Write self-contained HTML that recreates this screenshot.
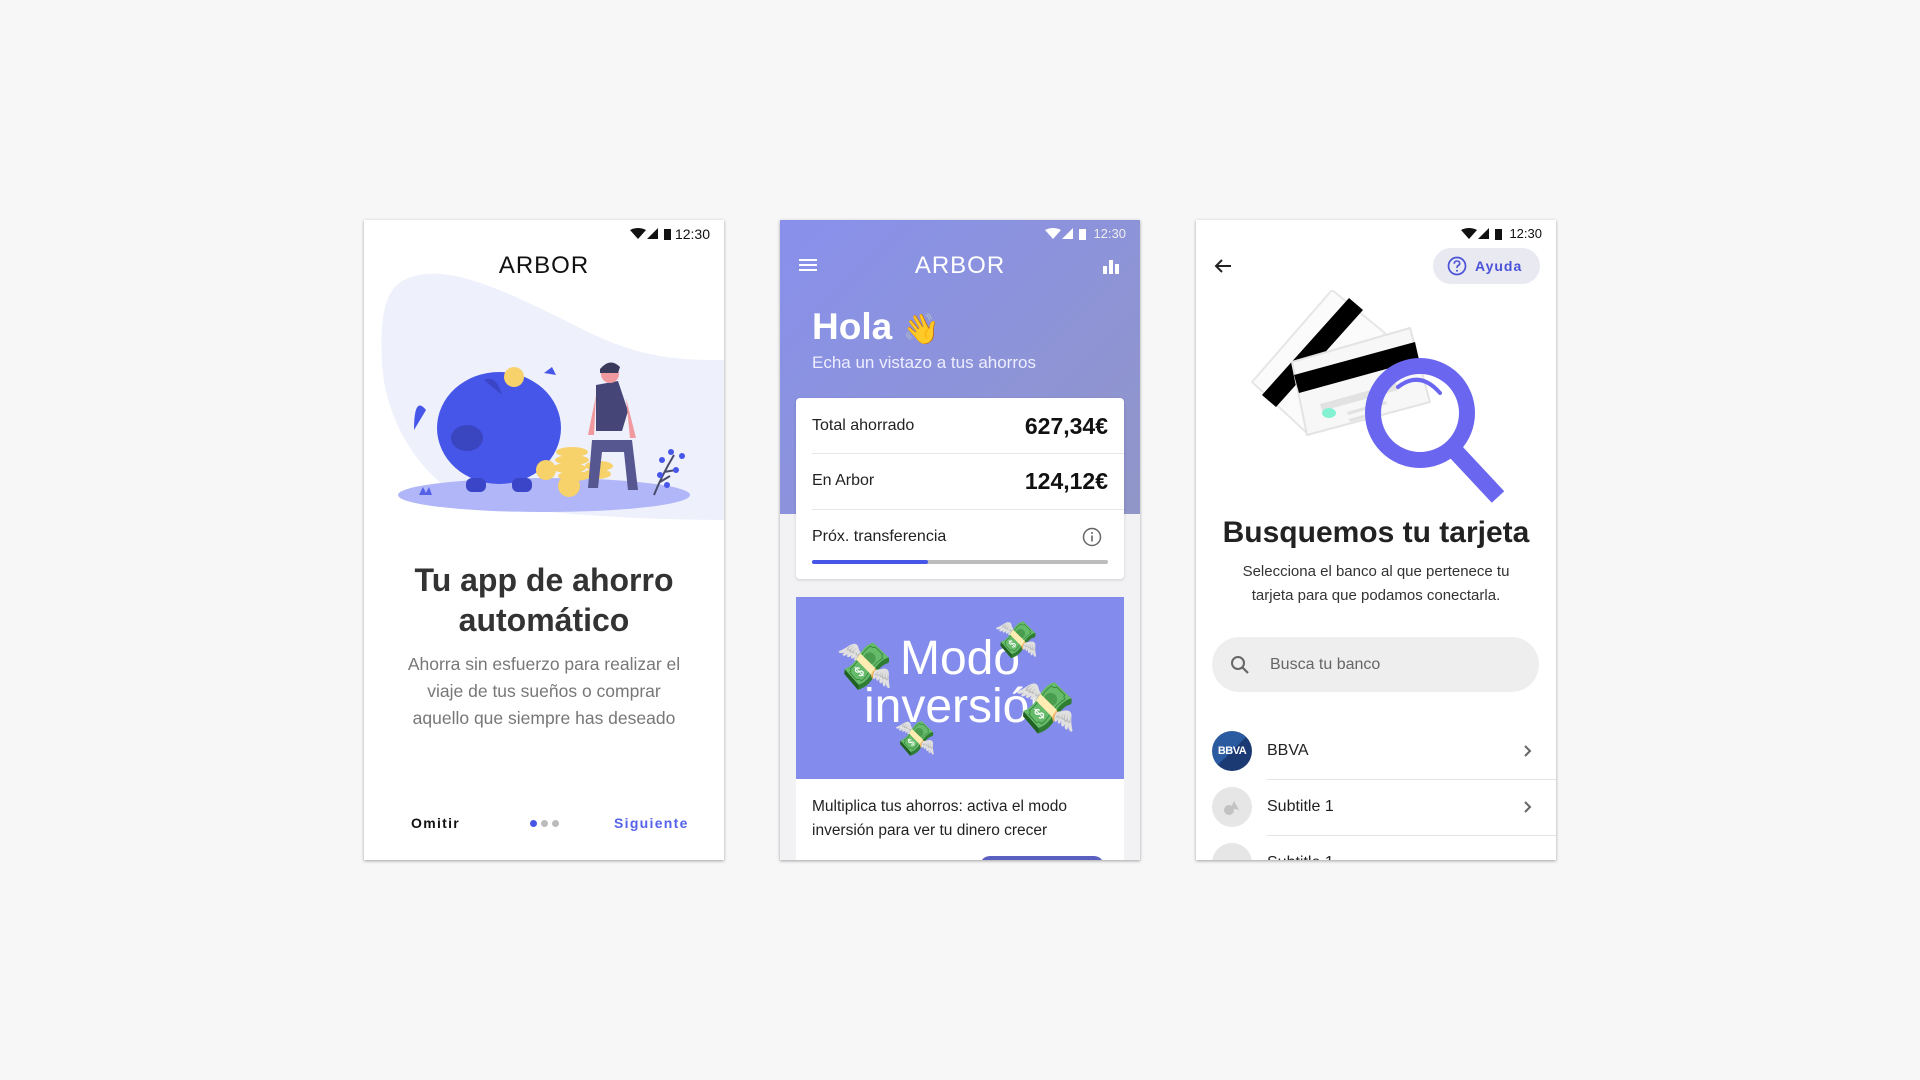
<!DOCTYPE html>
<html><head><meta charset="utf-8">
<style>
*{margin:0;padding:0;box-sizing:border-box}
body{width:1920px;height:1080px;background:#f7f7f7;font-family:"Liberation Sans",sans-serif;position:relative;overflow:hidden}
.ph{position:absolute;top:220px;width:360px;height:640px;background:#fff;overflow:hidden;box-shadow:0 1px 3px rgba(0,0,0,.35)}
.a{position:absolute}
.sb{position:absolute;right:14px;top:6px;font-size:13px;display:flex;align-items:center;gap:3px}
.logo{position:absolute;left:0;width:100%;text-align:center;top:32px;font-size:24px;letter-spacing:1px;font-weight:300}
.row{position:absolute;left:16px;width:328px;height:56px;display:flex;align-items:center;justify-content:space-between;padding:0 16px;font-size:16px;color:#222}
</style></head><body>

<!-- PHONE 1 -->
<div class="ph" style="left:364px">
  <div class="sb" style="font-size:14px;color:#111">
    <svg width="42" height="12" viewBox="0 0 42 12"><path d="M0 2 Q8 -2 16 2 L8 11Z" fill="#111"/><path d="M17 11 L28 0 L28 11Z" fill="#111"/><rect x="34" y="1" width="7" height="11" fill="#111"/></svg>12:30
  </div>
  <div class="logo" style="color:#111">ARBOR</div>
  <svg class="a" style="left:0;top:50px" width="360" height="260" viewBox="0 0 360 260">
    <path d="M40 10 C80 -10 140 20 220 60 C280 90 320 90 360 90 L360 250 C280 250 200 245 120 235 C70 225 20 160 18 90 C16 50 20 20 40 10Z" fill="#eef0fb"/>
    <ellipse cx="180" cy="225" rx="146" ry="17" fill="#b0b6f7"/>
    <path d="M55 225 l4 -8 l3 6 l3 -6 l3 8z" fill="#5560e8"/>
    <path d="M62 140 Q50 125 50 160 Z" fill="#4656e8"/>
    <ellipse cx="135" cy="158" rx="62" ry="56" fill="#4656e8"/>
    <path d="M120 110 Q132 104 138 125 Z" fill="#3a45c8"/>
    <ellipse cx="103" cy="168" rx="16" ry="13" fill="#3a45c0"/>
    <circle cx="150" cy="107" r="10" fill="#f7d16a"/>
    <path d="M180 103 l8 -6 l4 8z" fill="#4656e8"/>
    <rect x="102" y="208" width="20" height="14" rx="6" fill="#3a45c8"/>
    <rect x="148" y="208" width="20" height="14" rx="6" fill="#3a45c8"/>
    <g fill="#f7d16a"><ellipse cx="208" cy="182" rx="16" ry="5"/><ellipse cx="208" cy="190" rx="17" ry="5"/><ellipse cx="205" cy="198" rx="17" ry="5"/><ellipse cx="210" cy="206" rx="16" ry="5"/><ellipse cx="235" cy="196" rx="14" ry="5"/><ellipse cx="233" cy="204" rx="14" ry="5"/><circle cx="182" cy="200" r="10"/><circle cx="205" cy="216" r="11"/></g>
    <path d="M232 115 l22 -4 l10 30 l-6 20 l-26 0z" fill="#454577"/>
    <circle cx="246" cy="104" r="9" fill="#f09aa0"/>
    <path d="M236 99 q10 -12 20 -2 l-2 6 l-18 0z" fill="#3a3a5c"/>
    <path d="M228 170 l40 0 l6 50 l-10 0 l-4 -38 l-22 0 l-4 36 l-10 0z" fill="#565690"/>
    <path d="M232 125 l-8 40 l6 0z M262 128 l10 40 l-6 0z" fill="#f09aa0"/>
    <path d="M290 225 q8 -20 20 -40 M296 212 l10 -6 M300 202 l12 -2" stroke="#4a4a6a" stroke-width="2" fill="none"/>
    <g fill="#4656e8"><circle cx="307" cy="182" r="3"/><circle cx="298" cy="190" r="3"/><circle cx="312" cy="200" r="3"/><circle cx="296" cy="205" r="3"/><circle cx="318" cy="186" r="3"/><circle cx="303" cy="215" r="3"/></g>
  </svg>
  <div class="a" style="left:0;width:360px;top:340px;text-align:center;font-size:32px;font-weight:bold;color:#333;line-height:40px">Tu app de ahorro<br>automático</div>
  <div class="a" style="left:0;width:360px;top:431px;text-align:center;font-size:17.5px;color:#777;line-height:27px">Ahorra sin esfuerzo para realizar el<br>viaje de tus sueños o comprar<br>aquello que siempre has deseado</div>
  <div class="a" style="left:47px;top:595px;font-size:14px;font-weight:bold;letter-spacing:1.3px;color:#111">Omitir</div>
  <div class="a" style="left:166px;top:600px;display:flex;gap:4px"><span style="width:7px;height:7px;border-radius:50%;background:#4656e8"></span><span style="width:7px;height:7px;border-radius:50%;background:#bbb"></span><span style="width:7px;height:7px;border-radius:50%;background:#bbb"></span></div>
  <div class="a" style="left:250px;top:595px;font-size:14px;font-weight:bold;letter-spacing:1.3px;color:#5563ea">Siguiente</div>
</div>

<!-- PHONE 2 -->
<div class="ph" style="left:780px;background:#f2f2f4">
  <div class="a" style="left:0;top:0;width:360px;height:294px;background:linear-gradient(135deg,#8890ec,#9196c8)"></div>
  <div class="sb" style="color:#eee">
    <svg width="42" height="12" viewBox="0 0 42 12"><path d="M0 2 Q8 -2 16 2 L8 11Z" fill="#fff"/><path d="M17 11 L28 0 L28 11Z" fill="#fff"/><rect x="34" y="1" width="7" height="11" fill="#fff"/></svg>&nbsp;12:30
  </div>
  <svg class="a" style="left:19px;top:38px" width="18" height="14"><rect y="1" width="18" height="2" fill="#fff"/><rect y="6" width="18" height="2" fill="#fff"/><rect y="11" width="18" height="2" fill="#fff"/></svg>
  <svg class="a" style="left:323px;top:38px" width="16" height="16"><rect x="0" y="8" width="4" height="8" fill="#fff"/><rect x="6" y="2" width="4" height="14" fill="#fff"/><rect x="12" y="6" width="4" height="10" fill="#fff"/></svg>
  <div class="logo" style="color:#fff">ARBOR</div>
  <div class="a" style="left:32px;top:86px;font-size:37px;font-weight:bold;color:#fff">Hola <span style="font-size:30px">👋</span></div>
  <div class="a" style="left:32px;top:133px;font-size:17px;color:#eef">Echa un vistazo a tus ahorros</div>
  <div class="a" style="left:16px;top:178px;width:328px;height:181px;background:#fff;border-radius:4px;box-shadow:0 1px 3px rgba(0,0,0,.15)"></div>
  <div class="row" style="top:178px"><span>Total ahorrado</span><b style="font-size:23px;color:#111">627,34€</b></div>
  <div class="a" style="left:32px;top:233px;width:312px;height:1px;background:#e6e6e6"></div>
  <div class="row" style="top:233px"><span>En Arbor</span><b style="font-size:23px;color:#111">124,12€</b></div>
  <div class="a" style="left:32px;top:289px;width:312px;height:1px;background:#e6e6e6"></div>
  <div class="row" style="top:289px"><span>Próx. transferencia</span><svg width="20" height="20" style="margin-right:6px"><circle cx="10" cy="10" r="8.5" fill="none" stroke="#666" stroke-width="1.5"/><rect x="9.2" y="8.5" width="1.6" height="6" fill="#666"/><circle cx="10" cy="6" r="1" fill="#666"/></svg></div>
  <div class="a" style="left:32px;top:340px;width:296px;height:4px;background:#bdbdbd;border-radius:2px"><div style="width:116px;height:4px;background:#4656e8;border-radius:2px"></div></div>
  <div class="a" style="left:16px;top:377px;width:328px;height:263px;background:#fff"></div>
  <div class="a" style="left:16px;top:377px;width:328px;height:182px;background:#838cec;overflow:hidden">
    <div class="a" style="left:0;width:328px;top:38px;text-align:center;color:#fff;font-size:48px;line-height:48px">Modo<br>inversión</div>
    <span class="a" style="left:40px;top:42px;font-size:46px">💸</span>
    <span class="a" style="left:198px;top:22px;font-size:36px">💸</span>
    <span class="a" style="left:218px;top:82px;font-size:50px">💸</span>
    <span class="a" style="left:98px;top:122px;font-size:34px">💸</span>
  </div>
  <div class="a" style="left:32px;top:575px;font-size:15.5px;color:#222;line-height:24px">Multiplica tus ahorros: activa el modo<br>inversión para ver tu dinero crecer</div>
  <div class="a" style="left:200px;top:636px;width:124px;height:20px;border-radius:10px;background:#5a5fc0"></div>
</div>

<!-- PHONE 3 -->
<div class="ph" style="left:1196px">
  <div class="sb" style="color:#111;font-size:13px">
    <svg width="42" height="12" viewBox="0 0 42 12"><path d="M0 2 Q8 -2 16 2 L8 11Z" fill="#111"/><path d="M17 11 L28 0 L28 11Z" fill="#111"/><rect x="34" y="1" width="7" height="11" fill="#111"/></svg>&nbsp;12:30
  </div>
  <svg class="a" style="left:18px;top:38px" width="18" height="16"><path d="M17 8 H2 M8 2 L2 8 L8 14" stroke="#222" stroke-width="2" fill="none"/></svg>
  <div class="a" style="left:237px;top:28px;width:107px;height:36px;border-radius:18px;background:#e9e9f1;display:flex;align-items:center;padding-left:14px;gap:8px;color:#4a52d8;font-weight:bold;font-size:14px;letter-spacing:1px">
    <svg width="20" height="20"><circle cx="10" cy="10" r="8.5" fill="none" stroke="#4a52d8" stroke-width="1.7"/><path d="M7.3 7.8 Q7.3 5 10 5 Q12.7 5 12.7 7.5 Q12.7 9 10.5 10 Q10 10.4 10 12" fill="none" stroke="#4a52d8" stroke-width="1.6"/><circle cx="10" cy="14.7" r="1" fill="#4a52d8"/></svg>Ayuda
  </div>
  <svg class="a" style="left:50px;top:70px" width="270" height="225" viewBox="0 0 270 225">
    <path d="M86 0 L6 92 L63 145 L139 43Z" fill="#fbfbfb" stroke="#e6e6e6" stroke-width="2" stroke-linejoin="round"/>
    <path d="M16 105 L30 117 L117 20 L103 8Z" fill="#000"/>
    <path d="M46 72 L164 38 L184 112 L61 145Z" fill="#f7f7f7" stroke="#e3e3e3" stroke-width="2" stroke-linejoin="round"/>
    <path d="M48 85 L169 52 L173 70 L53 103Z" fill="#000"/>
    <path d="M74 114 L150 93 L152 100 L76 121Z" fill="#e2e2e2"/>
    <ellipse cx="83" cy="123" rx="7" ry="5" fill="#84f2d2"/>
    <path d="M101 122 L140 111 L141 114 L102 125Z M103 129 L135 120 L136 123 L104 132Z" fill="#e2e2e2"/>
    <circle cx="174" cy="123" r="47" fill="none" stroke="#6b66f0" stroke-width="16"/>
    <path d="M152 97 Q174 80 194 103" fill="none" stroke="#6b66f0" stroke-width="4" stroke-linecap="round"/>
    <path d="M210 162 L252 207" stroke="#6b66f0" stroke-width="17" stroke-linecap="butt"/>
  </svg>
  <div class="a" style="left:0;width:360px;top:296px;text-align:center;font-size:30px;font-weight:bold;color:#222">Busquemos tu tarjeta</div>
  <div class="a" style="left:0;width:360px;top:340px;text-align:center;font-size:15px;color:#333;line-height:24px">Selecciona el banco al que pertenece tu<br>tarjeta para que podamos conectarla.</div>
  <div class="a" style="left:16px;top:417px;width:327px;height:55px;border-radius:28px;background:#eee;display:flex;align-items:center;padding-left:18px;color:#666;font-size:16px">
    <svg width="20" height="20" style="margin-right:20px"><circle cx="8" cy="8" r="6" fill="none" stroke="#666" stroke-width="2"/><path d="M12.5 12.5 L18 18" stroke="#666" stroke-width="2.2"/></svg>Busca tu banco
  </div>
  <div class="a" style="left:16px;top:511px;width:40px;height:40px;border-radius:50%;background:linear-gradient(135deg,#2a5aa0 50%,#1b3a74 50%);color:#fff;font-size:11px;font-weight:bold;display:flex;align-items:center;justify-content:center;letter-spacing:-.5px">BBVA</div>
  <div class="a" style="left:71px;top:522px;font-size:16px;color:#222">BBVA</div>
  <svg class="a" style="left:327px;top:524px" width="10" height="14"><path d="M2 2 L7 7 L2 12" stroke="#666" stroke-width="2" fill="none"/></svg>
  <div class="a" style="left:71px;top:559px;width:289px;height:1px;background:#e4e4e4"></div>
  <div class="a" style="left:16px;top:567px;width:40px;height:40px;border-radius:50%;background:#e6e6e6"><svg width="40" height="40"><circle cx="17" cy="23" r="5" fill="#c2c2c2"/><path d="M22 14 L27 23 L19 21Z" fill="#c2c2c2"/></svg></div>
  <div class="a" style="left:71px;top:578px;font-size:16px;color:#222">Subtitle 1</div>
  <svg class="a" style="left:327px;top:580px" width="10" height="14"><path d="M2 2 L7 7 L2 12" stroke="#666" stroke-width="2" fill="none"/></svg>
  <div class="a" style="left:71px;top:615px;width:289px;height:1px;background:#e4e4e4"></div>
  <div class="a" style="left:16px;top:623px;width:40px;height:40px;border-radius:50%;background:#e6e6e6"></div>
  <div class="a" style="left:71px;top:634px;font-size:16px;color:#222">Subtitle 1</div>
</div>
</body></html>
